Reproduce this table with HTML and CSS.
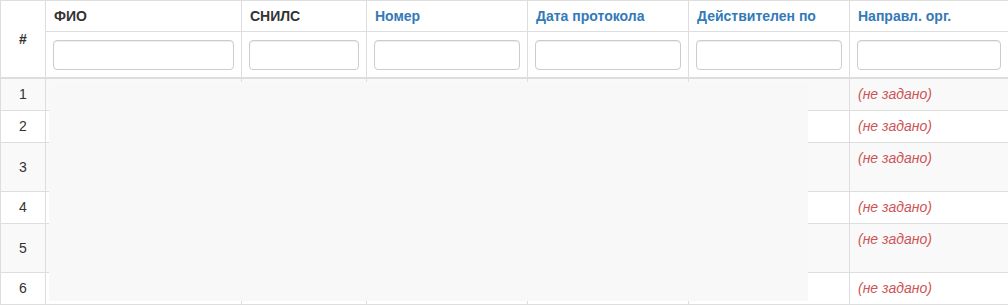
FILE: index.html
```html
<!DOCTYPE html>
<html lang="ru">
<head>
  <meta charset="UTF-8">
  <meta name="viewport" content="width=device-width, initial-scale=1.0">
  <title>Протоколы</title>
  <link rel="stylesheet" href="styles.css">
</head>
<body>
  <div class="grid-view">
    <table class="grid">
      <colgroup>
        <col class="w-num">
        <col class="w-fio">
        <col class="w-snils">
        <col class="w-mid">
        <col class="w-mid">
        <col class="w-mid">
        <col class="w-org">
      </colgroup>
      <thead>
        <tr>
          <th rowspan="2" class="col-num">#</th>
          <th>ФИО</th>
          <th>СНИЛС</th>
          <th><a href="#">Номер</a></th>
          <th><a href="#">Дата протокола</a></th>
          <th><a href="#">Действителен по</a></th>
          <th><a href="#">Направл. орг.</a></th>
        </tr>
        <tr class="filters">
          <td><input type="text" class="form-control"></td>
          <td><input type="text" class="form-control"></td>
          <td><input type="text" class="form-control"></td>
          <td><input type="text" class="form-control"></td>
          <td><input type="text" class="form-control"></td>
          <td><input type="text" class="form-control"></td>
        </tr>
      </thead>
      <tbody>
        <tr><td class="col-num">1</td><td></td><td></td><td></td><td></td><td></td><td><span class="not-set">(не задано)</span></td></tr>
        <tr><td class="col-num">2</td><td></td><td></td><td></td><td></td><td></td><td><span class="not-set">(не задано)</span></td></tr>
        <tr class="row-tall"><td class="col-num">3</td><td></td><td></td><td></td><td></td><td></td><td><span class="not-set">(не задано)</span></td></tr>
        <tr><td class="col-num">4</td><td></td><td></td><td></td><td></td><td></td><td><span class="not-set">(не задано)</span></td></tr>
        <tr class="row-tall"><td class="col-num">5</td><td></td><td></td><td></td><td></td><td></td><td><span class="not-set">(не задано)</span></td></tr>
        <tr><td class="col-num">6</td><td></td><td></td><td></td><td></td><td></td><td><span class="not-set">(не задано)</span></td></tr>
      </tbody>
    </table>
    <div class="grid-cover"></div>
  </div>
</body>
</html>
```

FILE: styles.css
```css
* { box-sizing: border-box; }
body { margin: 0; font-family: "Liberation Sans", Arial, sans-serif; font-size: 14px; line-height: 20px; color: #333; background: #fff; }

.grid-view { position: relative; }
.grid { width: 1008px; border-collapse: collapse; table-layout: fixed; border: 1px solid #ddd; }
.w-num { width: 45px; }
.w-fio { width: 196px; }
.w-snils { width: 125px; }
.w-mid { width: 161px; }
.w-org { width: 159px; }

.grid th, .grid td { border: 1px solid #ddd; padding: 5px 8px; text-align: left; vertical-align: top; }
.grid th { font-weight: bold; }
.grid th a { color: #337ab7; text-decoration: none; }
.grid th.col-num { border-bottom-width: 2px; }
.grid .col-num { text-align: center; vertical-align: middle; }

.filters td { padding: 8px 7px 7px; border-bottom-width: 2px; }
.form-control { display: block; width: 100%; height: 30px; margin: 0; padding: 5px 10px; border: 1px solid #ccc; border-radius: 4px; background: #fff; box-shadow: inset 0 1px 1px rgba(0,0,0,0.075); font: inherit; }

.grid tbody tr:nth-child(odd) { background: #f9f9f9; }
.grid tbody td { height: 32px; }
.grid tbody .row-tall td { height: 49px; }
.not-set { color: #c55; font-style: italic; }

.grid-cover { position: absolute; left: 49px; top: 82px; width: 759px; height: 219px; background: #f8f8f8; }
```
